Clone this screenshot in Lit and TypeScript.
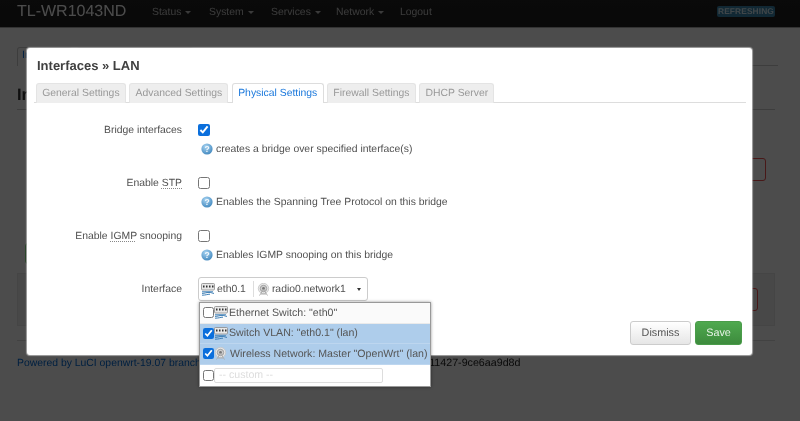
import { LitElement, html, css } from "lit";
import { customElement } from "lit/decorators.js";

const ethIcon = html`<svg class="ico eth" width="14" height="13" viewBox="0 0 14 13">
  <rect x="0.5" y="0.5" width="13" height="6.5" rx="1" fill="#e8e8e8" stroke="#8a8a8a" stroke-width="0.8"/>
  <g fill="#333"><rect x="2" y="2.5" width="1.5" height="2"/><rect x="5" y="2.5" width="1.5" height="2"/><rect x="8" y="2.5" width="1.5" height="2"/><rect x="11" y="2.5" width="1.5" height="2"/></g>
  <path d="M1 8.8h11M1 10.4c3 0 4-1 7-1s3 1 5 1M1 12.2c4 0 5-1 8-1" fill="none" stroke="#3f7fb5" stroke-width="1"/>
</svg>`;

const radioIcon = html`<svg class="ico wifi" width="13" height="13" viewBox="0 0 13 13">
  <circle cx="6.5" cy="5.5" r="5.2" fill="#e6e6e6" stroke="#c4c4c4" stroke-width="0.8"/>
  <circle cx="6.5" cy="5.5" r="3.2" fill="#cfcfcf" stroke="#9a9a9a" stroke-width="0.9"/>
  <circle cx="6.5" cy="5.5" r="1.4" fill="#777"/>
  <path d="M6.5 6.5L2.5 12.5M6.5 6.5L10.5 12.5M4 11h5" fill="none" stroke="#a8a8a8" stroke-width="0.9"/>
</svg>`;

const helpIcon = html`<svg class="help-ico" width="12" height="12" viewBox="0 0 12 12">
  <defs><radialGradient id="h" cx="40%" cy="30%" r="75%"><stop offset="0" stop-color="#a8d4f2"/><stop offset="1" stop-color="#3f86bd"/></radialGradient></defs>
  <circle cx="6" cy="6" r="5.6" fill="url(#h)"/>
  <text x="6" y="9" text-anchor="middle" font-family="Liberation Sans" font-weight="700" font-size="8.5" fill="#f4f9fd">?</text>
</svg>`;

@customElement("app-root")
export class AppRoot extends LitElement {
  static styles = css`
    :host { display: block; position: relative; height: 421px; overflow: hidden; background: #fff;
      font-family: "Liberation Sans", Arial, sans-serif; font-size: 10.4px; color: #404040;
      text-rendering: geometricPrecision; filter: blur(0.3px); }
    * { box-sizing: border-box; }

    .nav { height: 28px; background: linear-gradient(#222, #1f1f1f); border-bottom: 1px solid #aaa; display: flex; align-items: center; padding: 0 25px 0 17px; color: #c4c4c4; }
    .brand { font-size: 16px; color: #fff; width: 135px; margin-top: -4px; }
    .menu { display: flex; margin-top: -3px; }
    .menu span { display: inline-flex; align-items: center; gap: 4px; }
    .menu i { border: 3px solid transparent; border-top-color: #c4c4c4; border-bottom: 0; }
    .m1 { width: 57px; } .m2 { width: 62px; } .m3 { width: 65px; } .m4 { width: 64px; }
    .badge { margin-left: auto; margin-top: -5px; width: 58px; height: 11px; border-radius: 2px; background: #3a87ad; color: #d6eaf4; font-size: 8.4px; font-weight: 700; line-height: 11px; text-align: center; letter-spacing: 0.1px; }

    .page { padding: 0 22px 0 17px; }
    .ptabs { display: flex; height: 19px; margin-top: 19px; border-bottom: 1px solid #ccc; gap: 5px; }
    .ptabs span { height: 19px; border: 1px solid #ccc; border-bottom: 0; border-radius: 3px 3px 0 0; padding: 2px 4px; color: #0069d6; }
    .ptabs .t1 { width: 55px; background: #fff; } .ptabs .t2 { width: 116px; border-color: #ddd; }
    h2 { margin: 19px 3px 0 0; padding: 0 0 4px; height: 25px; font-size: 16.5px; line-height: 20px; color: #333; border-bottom: 1px solid #ccc; }
    .del { display: flex; justify-content: flex-end; padding-right: 12px; margin-top: 48px; }
    .danger { width: 60px; height: 23px; border: 1px solid #f05050; border-radius: 3px; }
    .pos { width: 90px; height: 21px; margin: 62px 0 0 8px; border: 1px solid #6c6; background: #eee; border-radius: 3px; }
    .sec { margin: 9px 3px 0 0; height: 53px; background: #f2f2f2; border: 1px solid #e8e8e8; display: flex; justify-content: flex-end; align-items: center; padding-right: 16px; }
    .rule { margin: 14px 3px 0 0; border-top: 1px solid #ddd; }
    .foot { margin-top: 16px; white-space: nowrap; color: #222; }
    .foot a { color: #0069d6; }
    .foot span { margin-left: 3px; font-size: 10.7px; }

    .scrim { position: absolute; inset: 0; background: rgba(0, 0, 0, 0.7); }
    .modal { position: absolute; left: 27px; top: 48px; width: 725px; height: 307px; background: #fff; border-radius: 3px; box-shadow: 0 0 1px 1px rgba(200, 200, 200, 0.7); padding: 10px; display: flex; flex-direction: column; }
    h4 { margin: 0; font-size: 13px; line-height: 16px; font-weight: 700; color: #404040; }

    .tabs { display: flex; gap: 3.6px; margin: 9px -4px 0 -3px; padding-left: 2px; border-bottom: 1px solid #ddd; height: 20px; }
    .tab { height: 20px; padding: 0 5.2px; line-height: 20px; border: 1px solid #e4e4e4; border-bottom: 0; border-radius: 3px 3px 0 0; background: #eee; color: #999; white-space: nowrap; }
    .tab.on { background: #fff; border-color: #ddd; color: #1a78dc; }

    .form { margin-top: 15px; display: grid; grid-template-columns: 145px 1fr; column-gap: 16px; grid-template-rows: 53px 53px 53px 24px; }
    .lab { text-align: right; line-height: 26px; color: #505050; }
    .lab abbr { text-decoration: underline dotted #888; text-underline-offset: 2px; }
    .line { height: 24px; display: flex; align-items: center; }
    input[type="checkbox"] { margin: 0; width: 12px; height: 12px; accent-color: #0b6fdc; flex: none; }
    .help { display: flex; align-items: center; gap: 3px; padding-left: 3px; margin-top: 1px; height: 12px; color: #505050; }
    .help-ico { flex: none; }

    .sel { position: relative; display: inline-flex; align-items: center; width: 170px; height: 24px; border: 1px solid #ccc; border-radius: 3px; background: #fff; color: #505050; }
    .it { display: inline-flex; align-items: center; gap: 2px; }
    .ico { flex: none; }
    .it1 { padding: 0 7px 0 2px; border-right: 1px solid #ddd; height: 16px; }
    .it2 { padding-left: 3px; gap: 2px; }
    .arrow { position: absolute; right: 6px; top: 10px; border: 2.5px solid transparent; border-top: 3px solid #333; border-bottom: 0; }

    .drop { position: absolute; left: 0; top: 24px; width: 232px; border: 1px solid #999; background: #fff; box-shadow: 0 0 3px rgba(0, 0, 0, 0.4); font-size: 10.6px; }
    .opt { display: flex; align-items: center; height: 20.6px; padding-left: 3px; color: #555; white-space: nowrap; border-bottom: 1px solid #eaeaea; background: #fafafa; }
    .opt input { width: 11px; height: 11px; }
    .opt.sel-on { background: #aecdeb; border-bottom-color: #bdd6ef; }
    .opt:last-child { border-bottom: 0; height: 21.4px; background: #fff; }
    .opt .eth { margin-right: 1px; }
    .opt .wifi { margin-right: 3px; }
    .opt .custom { margin-left: 0; width: 169px; height: 15px; border: 1px solid #ddd; border-radius: 2px; padding: 0 4px; line-height: 13px; color: #ddd; background: #fff; }

    .acts { margin-top: auto; display: flex; justify-content: flex-end; gap: 4px; }
    .btn { height: 24px; border-radius: 3px; line-height: 22px; text-align: center; border: 1px solid #ccc; font-size: 10.8px; }
    .dismiss { width: 61px; background: linear-gradient(#fff, #e6e6e6); color: #555; }
    .save { width: 47px; border-color: #4a9c4a; background: linear-gradient(#4fa94f, #3d8b3d); color: #e8f3e8; }
  `;

  private row(label: unknown, checked: boolean, help: string) {
    return html`<div class="lab">${label}</div>
      <div>
        <div class="line"><input type="checkbox" .checked=${checked} /></div>
        <div class="help">${helpIcon}<span>${help}</span></div>
      </div>`;
  }

  render() {
    return html`
      <div class="nav">
        <div class="brand">TL-WR1043ND</div>
        <div class="menu">
          <span class="m1">Status <i></i></span>
          <span class="m2">System <i></i></span>
          <span class="m3">Services <i></i></span>
          <span class="m4">Network <i></i></span>
          <span>Logout</span>
        </div>
        <div class="badge">REFRESHING</div>
      </div>
      <div class="page">
        <div class="ptabs"><span class="t1">Interfaces</span><span class="t2">Global network options</span></div>
        <h2>Interfaces</h2>
        <div class="del"><div class="danger"></div></div>
        <div class="pos"></div>
        <div class="sec"><div class="danger"></div></div>
        <div class="rule"></div>
        <div class="foot"><a>Powered by LuCI openwrt-19.07 branch (git-20.057.55219-13dd17f)</a><span> / OpenWrt 19.07.2 r11427-9ce6aa9d8d</span></div>
      </div>
      <div class="scrim"></div>
      <div class="modal">
        <h4>Interfaces » LAN</h4>
        <div class="tabs">
          <div class="tab">General Settings</div>
          <div class="tab">Advanced Settings</div>
          <div class="tab on">Physical Settings</div>
          <div class="tab">Firewall Settings</div>
          <div class="tab">DHCP Server</div>
        </div>
        <div class="form">
          ${this.row("Bridge interfaces", true, "creates a bridge over specified interface(s)")}
          ${this.row(html`Enable <abbr>STP</abbr>`, false, "Enables the Spanning Tree Protocol on this bridge")}
          ${this.row(html`Enable <abbr>IGMP</abbr> snooping`, false, "Enables IGMP snooping on this bridge")}
          <div class="lab">Interface</div>
          <div>
            <div class="sel">
              <span class="it it1">${ethIcon}eth0.1</span>
              <span class="it it2">${radioIcon}radio0.network1</span>
              <span class="arrow"></span>
              <div class="drop">
                <div class="opt"><input type="checkbox" />${ethIcon}Ethernet Switch: "eth0"</div>
                <div class="opt sel-on"><input type="checkbox" checked />${ethIcon}Switch VLAN: "eth0.1" (lan)</div>
                <div class="opt sel-on"><input type="checkbox" checked />${radioIcon}Wireless Network: Master "OpenWrt" (lan)</div>
                <div class="opt"><input type="checkbox" /><div class="custom">-- custom --</div></div>
              </div>
            </div>
          </div>
        </div>
        <div class="acts">
          <div class="btn dismiss">Dismiss</div>
          <div class="btn save">Save</div>
        </div>
      </div>
    `;
  }
}
